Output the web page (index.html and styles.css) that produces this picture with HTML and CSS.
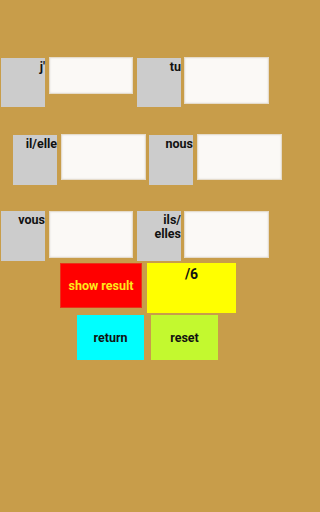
FILE: index.html
```html
<!DOCTYPE html>
<html>
<head>
<meta charset="utf-8">
<link rel="stylesheet" href="styles.css">
</head>
<body>
<div class="screen">
  <div class="row row1">
    <div class="label l-j">j'</div>
    <div class="field f-j"></div>
    <div class="label l-tu">tu</div>
    <div class="field f-tu"></div>
  </div>
  <div class="row row2">
    <div class="label l-il">il/elle</div>
    <div class="field f-il"></div>
    <div class="label l-nous">nous</div>
    <div class="field f-nous"></div>
  </div>
  <div class="row row3">
    <div class="label l-vous">vous</div>
    <div class="field f-vous"></div>
    <div class="label l-ils">ils/<br>elles</div>
    <div class="field f-ils"></div>
  </div>
  <div class="row buttons1">
    <div class="btn show">show result</div>
    <div class="btn score">/6</div>
  </div>
  <div class="row buttons2">
    <div class="btn ret">return</div>
    <div class="btn reset">reset</div>
  </div>
</div>
</body>
</html>
```
FILE: styles.css
```css
html, body {
  margin: 0;
  padding: 0;
  background: #c89d4a;
  overflow: hidden;
}
.screen {
  display: flex;
  flex-direction: column;
  width: 294px;
  height: 512px;
  background: #c89d4a;
  font-family: Roboto, "Liberation Sans", sans-serif;
  font-weight: bold;
  font-size: 12.5px;
  color: #111;
}
.row {
  display: flex;
  align-items: flex-start;
  flex-shrink: 0;
}
.label {
  background: #cccccc;
  text-align: right;
  line-height: 14px;
  padding-top: 2px;
  box-sizing: border-box;
  width: 44px;
  height: 49px;
  margin-top: 1px;
}
.field {
  background: #fbf9f6;
  border: 1px solid #e6dccb;
  box-shadow: inset 0 0 2px rgba(0,0,0,0.12);
  box-sizing: border-box;
}
/* row 1 */
.row1 { margin-top: 57px; }
.l-j { margin-left: 1px; }
.f-j { margin-left: 4px; width: 84px; height: 37px; }
.l-tu { margin-left: 4px; }
.f-tu { margin-left: 3px; width: 85px; height: 47px; }
/* row 2 */
.row2 { margin-top: 27px; }
.l-il { margin-left: 13px; height: 50px; }
.f-il { margin-left: 4px; width: 85px; height: 46px; }
.l-nous { margin-left: 3px; height: 50px; }
.f-nous { margin-left: 4px; width: 85px; height: 46px; }
/* row 3 */
.row3 { margin-top: 26px; }
.l-vous { margin-left: 1px; height: 50px; margin-top: 0; }
.f-vous { margin-left: 4px; width: 84px; height: 47px; }
.l-ils { margin-left: 4px; height: 50px; margin-top: 0; }
.f-ils { margin-left: 3px; width: 85px; height: 47px; }
/* buttons */
.btn {
  display: flex;
  align-items: center;
  justify-content: center;
  box-sizing: border-box;
}
.buttons1 { margin-top: 2px; }
.show {
  margin-left: 60px;
  width: 82px;
  height: 45px;
  background: #ff0000;
  color: #ffe81a;
  border: 1px solid #e8341a;
}
.score {
  margin-left: 5px;
  width: 89px;
  height: 50px;
  background: #ffff00;
  align-items: flex-start;
  padding-top: 3px;
  font-size: 14px;
}
.buttons2 { margin-top: 2px; }
.ret {
  margin-left: 77px;
  width: 67px;
  height: 45px;
  background: #00ffff;
}
.reset {
  margin-left: 7px;
  width: 67px;
  height: 45px;
  background: #c3f92f;
}
```
